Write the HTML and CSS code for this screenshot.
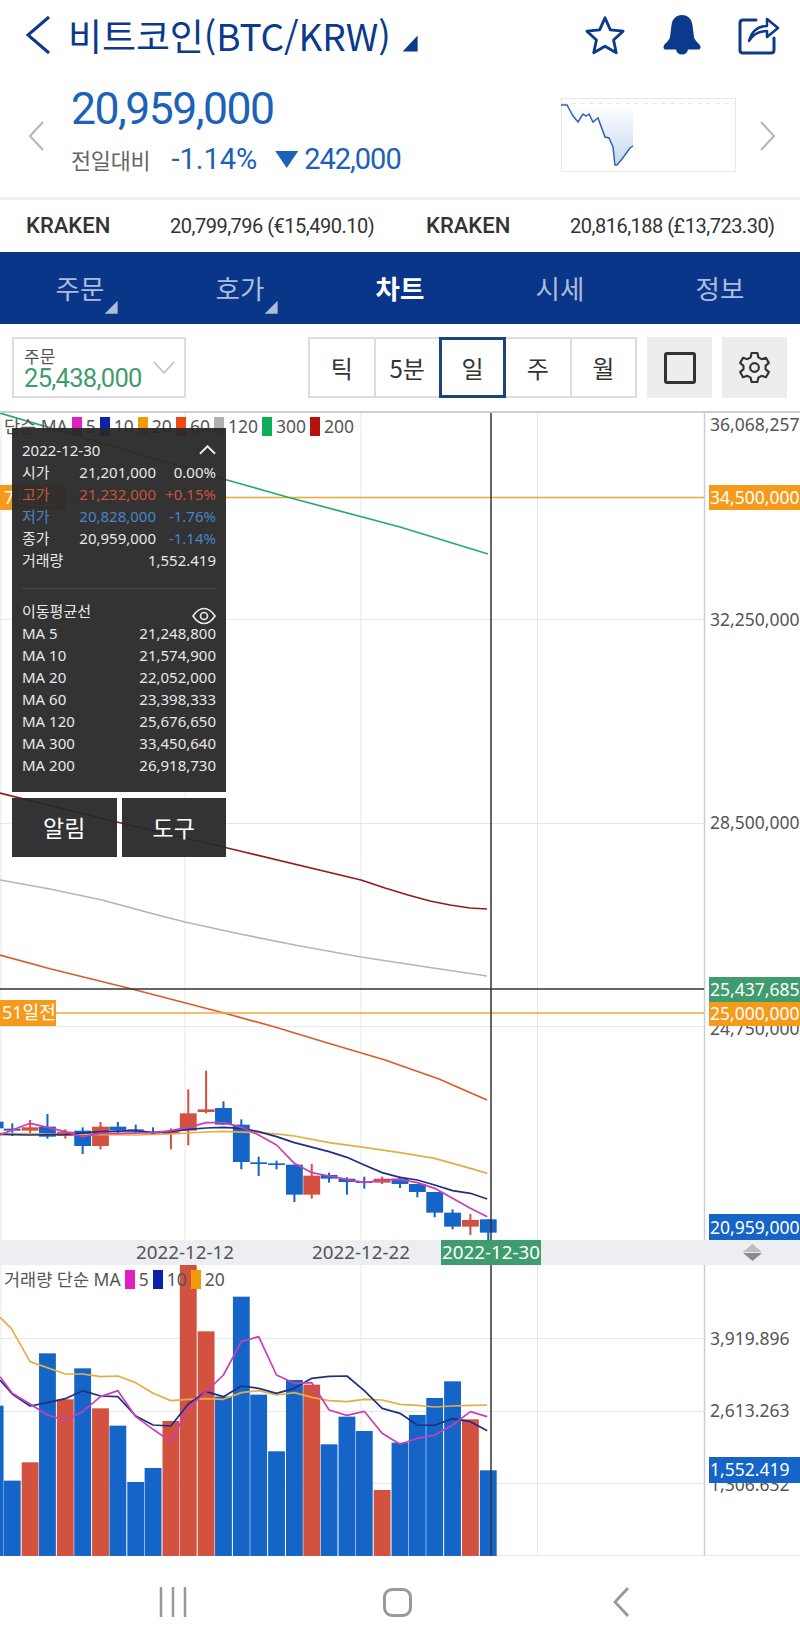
FILE: index.html
```html
<!DOCTYPE html>
<html lang="ko">
<head>
<meta charset="utf-8">
<title>비트코인 차트</title>
<link rel="stylesheet" href="styles.css">
</head>
<body>
<div class="app">
  <header class="title-row">
    <svg class="back" viewBox="0 0 26 40"><polyline points="24,2 3,20 24,38"/></svg>
    <h1 class="title">비트코인(BTC/KRW)</h1>
    <span class="title-caret"></span>
    <div class="title-icons">
      <svg class="ico" viewBox="0 0 44 42"><polygon class="star" points="22,3 27.6,15.6 41,17 31,26.2 33.8,39.6 22,32.8 10.2,39.6 13,26.2 3,17 16.4,15.6"/></svg>
      <svg class="ico bell" viewBox="0 0 38 40"><path d="M19 0C25 0 29 4 29.600 11L31 22C31.600 26 37.500 29 37.500 32.200C37.500 33.800 36.500 34.500 35 34.500H25C24.500 37.700 22 39.500 19 39.500C16 39.500 13.500 37.700 13 34.500H3C1.500 34.500 .5 33.800 .5 32.200C.5 29 6.400 26 7 22L8.400 11C9 4 13 0 19 0Z"/></svg>
      <svg class="ico" viewBox="0 0 42 40"><path class="share" d="M18 5H5Q2 5 2 8V35Q2 38 5 38H33Q36 38 36 35V23"/><path class="share-arrow" d="M11 26C14 15 21 11 29 11V4L40 13L29 22V16C21 16 15 19 11 26Z"/></svg>
    </div>
  </header>

  <section class="quote">
    <svg class="pager" viewBox="0 0 16 30"><polyline points="15,1 2,15 15,29"/></svg>
    <div class="price-block">
      <div class="price">20,959,000</div>
      <div class="change">
        <span class="change-label">전일대비</span>
        <span class="change-pct">-1.14%</span>
        <span class="change-tri"></span>
        <span class="change-val">242,000</span>
      </div>
    </div>
    <svg class="spark" viewBox="561 98 175 74">
      <defs><linearGradient id="sf" x1="0" y1="0" x2="0" y2="1"><stop offset="0" stop-color="#ffffff"/><stop offset="1" stop-color="#c5d8ef"/></linearGradient></defs>
      <rect class="spark-box" x="561.500" y="98.500" width="174" height="73"/>
      <line class="spark-dots" x1="562" y1="103.500" x2="735" y2="103.500"/>
      <polygon fill="url(#sf)" points="567,104 633,104 633,146 630,148 622,159 616,165 613,147 609,138 605,137 598,118 593,122 589,114 583,114 578,122 573,116 567,105"/>
      <polyline class="spark-line" points="561,105 567,105 573,116 578,122 583,114 586,116 589,114 593,122 598,118 605,137 609,138 613,147 615,165 617,165 622,159 630,148 633,146"/>
    </svg>
    <svg class="pager" viewBox="0 0 16 30"><polyline points="1,1 14,15 1,29"/></svg>
  </section>

  <section class="ticker">
    <div class="ticker-cell"><strong>KRAKEN</strong><span>20,799,796 (€15,490.10)</span></div>
    <div class="ticker-cell"><strong>KRAKEN</strong><span>20,816,188 (£13,723.30)</span></div>
  </section>

  <nav class="tabs">
    <div class="tab"><span class="tab-text has-menu">주문</span></div>
    <div class="tab"><span class="tab-text has-menu">호가</span></div>
    <div class="tab active"><span class="tab-text">차트</span></div>
    <div class="tab"><span class="tab-text">시세</span></div>
    <div class="tab"><span class="tab-text">정보</span></div>
  </nav>

  <section class="controls">
    <div class="select">
      <div class="select-text"><div class="select-label">주문</div><div class="select-value">25,438,000</div></div>
      <svg class="select-chev" viewBox="0 0 24 14"><polyline points="1,1 12,13 23,1"/></svg>
    </div>
    <div class="periods">
      <div class="period">틱</div>
      <div class="period">5분</div>
      <div class="period selected">일</div>
      <div class="period">주</div>
      <div class="period">월</div>
    </div>
    <div class="tool"><span class="tool-square"></span></div>
    <div class="tool">
      <svg class="gear" viewBox="0 0 32 34"><path d="M13 2H19L20 6.500L23.400 8.400L27.800 7L30.800 12.200L27.400 15.300V18.700L30.800 21.800L27.800 27L23.400 25.600L20 27.500L19 32H13L12 27.500L8.600 25.600L4.200 27L1.200 21.800L4.600 18.700V15.300L1.200 12.200L4.200 7L8.600 8.400L12 6.500Z"/><circle cx="16" cy="17" r="4.500"/></svg>
    </div>
  </section>

  <section class="chart">
    <svg class="plot" viewBox="0 411 800 1145">
      <!-- grid -->
      <g class="grid">
        <line x1="1" y1="411" x2="1" y2="1556"/>
        <line x1="185" y1="411" x2="185" y2="1556"/>
        <line x1="361" y1="411" x2="361" y2="1556"/>
        <line x1="537.500" y1="411" x2="537.500" y2="1556"/>
        <line x1="0" y1="619.500" x2="704" y2="619.500"/>
        <line x1="0" y1="823.500" x2="704" y2="823.500"/>
        <line x1="0" y1="1026.500" x2="704" y2="1026.500"/>
        <line x1="0" y1="1338.500" x2="704" y2="1338.500"/>
        <line x1="0" y1="1411.500" x2="704" y2="1411.500"/>
        <line x1="0" y1="1483.500" x2="704" y2="1483.500"/>
        <line x1="0" y1="1555.500" x2="800" y2="1555.500"/>
      </g>
      <line class="axis" x1="704.500" y1="411" x2="704.500" y2="1556"/>

      <!-- long moving averages -->
      <line class="level" x1="0" y1="497.500" x2="704" y2="497.500"/>
      <polyline class="ma ma-green" points="0,413 227,480 287,497 400,527 488,554"/>
      <polyline class="ma ma-darkred" points="0,793 117,822 240,851 361,880 385,888 408,895 430,901 450,905 470,908 487,909"/>
      <polyline class="ma ma-gray" points="0,880 50,889 102,900 150,913 185,922 240,934 300,946 361,957 420,966 487,976"/>
      <polyline class="ma ma-coral" points="0,955 51,969 128,988 224,1013 275,1027 321,1041 385,1060 439,1079 487,1100"/>
      <line class="cross" x1="0" y1="989" x2="704" y2="989"/>
      <line class="level" x1="0" y1="1013" x2="704" y2="1013"/>

      <!-- candles, bodies and wicks -->
      <g transform="translate(0 1040) scale(.5102 .3333)">
        <g class="dn">
          <rect x="955" y="538" width="4" height="62"/><rect x="940.500" y="538" width="33" height="40"/>
          <rect x="885" y="508" width="4" height="60"/><rect x="870.500" y="518" width="33" height="42"/>
          <rect x="850" y="456" width="4" height="76"/><rect x="835.500" y="456" width="33" height="62"/>
          <rect x="816" y="432" width="4" height="40"/><rect x="801.500" y="432" width="33" height="24"/>
          <rect x="782" y="410" width="4" height="34"/><rect x="767.500" y="416" width="33" height="16"/>
          <rect x="712" y="410" width="4" height="36"/><rect x="697.500" y="424" width="33" height="5"/>
          <rect x="678" y="412" width="4" height="52"/><rect x="663.500" y="416" width="33" height="10"/>
          <rect x="643" y="398" width="4" height="30"/><rect x="628.500" y="405" width="33" height="11"/>
          <rect x="575" y="374" width="4" height="112"/><rect x="560.500" y="374" width="33" height="90"/>
          <rect x="540" y="362" width="4" height="26"/><rect x="525.500" y="370" width="33" height="5"/>
          <rect x="505" y="350" width="4" height="58"/><rect x="490.500" y="367" width="33" height="5"/>
          <rect x="471" y="238" width="4" height="150"/><rect x="456.500" y="254" width="33" height="112"/>
          <rect x="436" y="184" width="4" height="70"/><rect x="421.500" y="204" width="33" height="50"/>
          <rect x="298" y="262" width="4" height="23"/><rect x="283.500" y="275" width="33" height="5"/>
          <rect x="264" y="254" width="4" height="26"/><rect x="249.500" y="268" width="33" height="4"/>
          <rect x="229" y="246" width="4" height="36"/><rect x="214.500" y="260" width="33" height="10"/>
          <rect x="160" y="262" width="4" height="80"/><rect x="145.500" y="272" width="33" height="46"/>
          <rect x="91" y="222" width="4" height="74"/><rect x="76.500" y="260" width="33" height="30"/>
          <rect x="22" y="250" width="4" height="38"/><rect x="7.500" y="266" width="33" height="6"/>
          <rect x="-26" y="245" width="33" height="20"/>
        </g>
        <g class="up">
          <rect x="920" y="522" width="4" height="63"/><rect x="905.500" y="540" width="33" height="20"/>
          <rect x="747" y="410" width="4" height="22"/><rect x="732.500" y="416" width="33" height="12"/>
          <rect x="609" y="372" width="4" height="104"/><rect x="594.500" y="407" width="33" height="57"/>
          <rect x="402" y="92" width="4" height="128"/><rect x="387.500" y="208" width="33" height="8"/>
          <rect x="367" y="148" width="4" height="168"/><rect x="352.500" y="220" width="33" height="52"/>
          <rect x="333" y="265" width="4" height="63"/><rect x="318.500" y="275" width="33" height="7"/>
          <rect x="195" y="246" width="4" height="82"/><rect x="180.500" y="260" width="33" height="58"/>
          <rect x="126" y="268" width="4" height="28"/><rect x="111.500" y="275" width="33" height="13"/>
          <rect x="57" y="240" width="4" height="45"/><rect x="42.500" y="262" width="33" height="10"/>
        </g>
        <polyline class="ma ma-tan" points="0,280 100,282 197,284 266,285 335,282 404,276 438,274 507,278 550,283 577,288 645,308 714,322 784,338 852,355 887,370 922,385 955,400"/>
        <polyline class="ma ma-navy" points="0,283 59,285 128,283 197,275 266,272 300,278 335,275 369,268 404,264 438,262 473,265 507,275 542,290 577,308 645,335 680,352 714,375 749,398 784,412 818,420 852,435 887,452 922,460 955,477"/>
        <polyline class="ma ma-pink" points="0,285 24,270 59,250 93,262 128,275 162,290 197,280 231,280 300,278 335,272 369,262 404,248 438,248 473,262 507,285 542,315 577,370 611,398 645,408 680,418 714,428 749,420 784,418 818,428 852,445 887,475 922,505 955,530"/>
      </g>

      <!-- volume bars -->
      <g transform="translate(0 1260) scale(.5102 .3333)">
        <g class="dn">
          <rect x="940.500" y="631" width="33" height="257"/>
          <rect x="870.500" y="364" width="33" height="524"/>
          <rect x="835.500" y="414" width="33" height="474"/>
          <rect x="801.500" y="465" width="33" height="423"/>
          <rect x="767.500" y="548" width="33" height="340"/>
          <rect x="697.500" y="513" width="33" height="375"/>
          <rect x="663.500" y="470" width="33" height="418"/>
          <rect x="628.500" y="553" width="33" height="335"/>
          <rect x="560.500" y="360" width="33" height="528"/>
          <rect x="525.500" y="574" width="33" height="314"/>
          <rect x="490.500" y="404" width="33" height="484"/>
          <rect x="456.500" y="110" width="33" height="778"/>
          <rect x="421.500" y="410" width="33" height="478"/>
          <rect x="283.500" y="624" width="33" height="264"/>
          <rect x="249.500" y="666" width="33" height="222"/>
          <rect x="214.500" y="497" width="33" height="391"/>
          <rect x="145.500" y="325" width="33" height="563"/>
          <rect x="76.500" y="280" width="33" height="608"/>
          <rect x="7.500" y="662" width="33" height="226"/>
          <rect x="-26" y="437" width="33" height="451"/>
        </g>
        <g class="up">
          <rect x="905.500" y="478" width="33" height="410"/>
          <rect x="732.500" y="690" width="33" height="198"/>
          <rect x="594.500" y="374" width="33" height="514"/>
          <rect x="387.500" y="214" width="33" height="674"/>
          <rect x="352.500" y="15" width="33" height="873"/>
          <rect x="318.500" y="483" width="33" height="405"/>
          <rect x="180.500" y="445" width="33" height="443"/>
          <rect x="111.500" y="418" width="33" height="470"/>
          <rect x="42.500" y="607" width="33" height="281"/>
        </g>
        <polyline class="ma ma-tan" points="0,172 22,205 59,305 128,342 162,342 197,350 231,348 266,368 300,400 335,422 369,418 404,416 438,418 473,398 507,392 542,405 577,398 611,412 645,422 680,425 714,418 749,420 784,433 818,436 852,441 887,438 922,436 955,435"/>
        <polyline class="ma ma-navy" points="0,360 24,402 59,438 93,428 128,416 162,392 197,408 231,410 266,468 300,495 335,498 369,432 404,395 438,410 473,378 507,385 542,400 577,385 611,355 645,349 680,348 714,392 749,445 784,460 818,495 852,496 887,476 922,485 955,512"/>
        <polyline class="ma ma-pink" points="0,350 24,400 59,432 93,465 128,481 162,455 197,410 231,392 266,470 300,508 335,545 369,445 404,395 438,345 473,245 507,230 542,345 577,370 611,368 645,450 680,466 714,454 749,520 784,553 818,535 852,525 887,495 922,455 955,470"/>
      </g>

      <!-- date band -->
      <rect class="band" x="0" y="1240" width="800" height="25"/>
      <line class="cross" x1="491" y1="411" x2="491" y2="1556"/>
      <text class="date" x="185" y="1259">2022-12-12</text>
      <text class="date" x="361" y="1259">2022-12-22</text>
      <rect class="tag-green" x="441" y="1240" width="100" height="25"/>
      <text class="date date-on" x="491" y="1259">2022-12-30</text>
      <polygon class="arrow-up" points="752.500,1244 762,1252 743,1252"/>
      <polygon class="arrow-down" points="743,1253 762,1253 752.500,1261"/>

      <!-- axis labels -->
      <text class="ax" x="710" y="431">36,068,257</text>
      <text class="ax" x="710" y="626">32,250,000</text>
      <text class="ax" x="710" y="829">28,500,000</text>
      <text class="ax" x="710" y="1035">24,750,000</text>
      <rect class="tag-orange" x="709" y="485" width="91" height="25"/>
      <text class="ax ax-on" x="710" y="504">34,500,000</text>
      <rect class="tag-green" x="709" y="977" width="91" height="25"/>
      <text class="ax ax-on" x="710" y="996">25,437,685</text>
      <rect class="tag-orange" x="709" y="1002" width="91" height="24"/>
      <text class="ax ax-on" x="710" y="1020">25,000,000</text>
      <rect class="tag-blue" x="709" y="1214" width="91" height="26"/>
      <text class="ax ax-on" x="710" y="1234">20,959,000</text>
      <text class="ax" x="710" y="1345">3,919.896</text>
      <text class="ax" x="710" y="1417">2,613.263</text>
      <text class="ax" x="710" y="1491">1,306.632</text>
      <rect class="tag-blue" x="709" y="1457" width="91" height="26"/>
      <text class="ax ax-on" x="710" y="1476">1,552.419</text>

      <!-- level tags on the left -->
      <rect class="tag-orange" x="0" y="485" width="66" height="25"/>
      <text class="lvl" x="4" y="504">71일전</text>
      <rect class="tag-orange" x="0" y="1000" width="56" height="26"/>
      <text class="lvl" x="2" y="1019">51일전</text>
    </svg>

    <div class="legend legend-price">
      <span>단순 MA</span>
      <i class="sw c-pink"></i><span>5</span>
      <i class="sw c-navy"></i><span>10</span>
      <i class="sw c-orange"></i><span>20</span>
      <i class="sw c-red"></i><span>60</span>
      <i class="sw c-gray"></i><span>120</span>
      <i class="sw c-green"></i><span>300</span>
      <i class="sw c-dark"></i><span>200</span>
    </div>
    <div class="legend legend-vol">
      <span>거래량 단순 MA</span>
      <i class="sw c-pink"></i><span>5</span>
      <i class="sw c-navy"></i><span>10</span>
      <i class="sw c-orange"></i><span>20</span>
    </div>

    <aside class="overlay">
      <div class="panel">
        <div class="row row-head"><span class="row-label">2022-12-30</span>
          <svg class="collapse" viewBox="0 0 18 10"><polyline points="1,9 9,1 17,9"/></svg></div>
        <div class="row"><span class="row-label">시가</span><span>21,201,000</span><span class="pct">0.00%</span></div>
        <div class="row tone-red"><span class="row-label">고가</span><span>21,232,000</span><span class="pct">+0.15%</span></div>
        <div class="row tone-blue"><span class="row-label">저가</span><span>20,828,000</span><span class="pct">-1.76%</span></div>
        <div class="row"><span class="row-label">종가</span><span>20,959,000</span><span class="pct tone-blue">-1.14%</span></div>
        <div class="row"><span class="row-label">거래량</span><span>1,552.419</span></div>
        <div class="divider"></div>
        <div class="row row-head"><span class="row-label">이동평균선</span>
          <svg class="eye" viewBox="0 0 24 18"><path d="M1 9C5 3 8.500 1.500 12 1.500C15.500 1.500 19 3 23 9C19 15 15.500 16.500 12 16.500C8.500 16.500 5 15 1 9Z"/><circle cx="12" cy="9" r="3.500"/></svg></div>
        <div class="row"><span class="row-label">MA 5</span><span>21,248,800</span></div>
        <div class="row"><span class="row-label">MA 10</span><span>21,574,900</span></div>
        <div class="row"><span class="row-label">MA 20</span><span>22,052,000</span></div>
        <div class="row"><span class="row-label">MA 60</span><span>23,398,333</span></div>
        <div class="row"><span class="row-label">MA 120</span><span>25,676,650</span></div>
        <div class="row"><span class="row-label">MA 300</span><span>33,450,640</span></div>
        <div class="row"><span class="row-label">MA 200</span><span>26,918,730</span></div>
      </div>
      <div class="panel-buttons">
        <div class="panel-btn">알림</div>
        <div class="panel-btn">도구</div>
      </div>
    </aside>
  </section>

  <footer class="sysnav">
    <div class="sys"><svg class="sys-menu" viewBox="0 0 28 30"><path d="M2 0V30M14 0V30M26 0V30"/></svg></div>
    <div class="sys"><span class="sys-home"></span></div>
    <div class="sys"><svg class="sys-back" viewBox="0 0 18 32"><polyline points="16,2 3,16 16,30"/></svg></div>
  </footer>
</div>
</body>
</html>
```
FILE: styles.css
```css
* { box-sizing: border-box; }
html, body { margin: 0; padding: 0; background: #fff; }
body { font-family: "Roboto", "Noto Sans CJK KR", sans-serif; color: #333; }
.app { width: 800px; height: 1650px; overflow: hidden; background: #fff; }

/* title row */
.title-row { height: 80px; display: flex; align-items: center; padding: 0 20px 10px 25px; }
.back { width: 26px; height: 40px; fill: none; stroke: #0b3a8c; stroke-width: 3; }
.title { margin: 0 0 0 17px; font: 400 37px/1 "Noto Sans CJK KR", sans-serif; color: #0b3a8c; letter-spacing: -.1px; white-space: nowrap; }
.title-caret { width: 15px; height: 16px; margin: 17px 0 0 12px; background: #0b3a8c; clip-path: polygon(100% 0, 100% 100%, 0 100%); }
.title-icons { margin-left: auto; display: flex; align-items: center; gap: 37px; }
.ico { width: 42px; height: 40px; display: block; overflow: visible; }
.ico.bell { width: 38px; }
.star { fill: none; stroke: #0b3a8c; stroke-width: 3; stroke-linejoin: round; }
.bell path { fill: #0b3a8c; }
.share { fill: none; stroke: #0b3a8c; stroke-width: 3; stroke-linecap: round; }
.share-arrow { fill: #fff; stroke: #0b3a8c; stroke-width: 2.5; stroke-linejoin: round; }

/* quote row */
.quote { height: 117px; display: flex; align-items: flex-start; padding: 3px 24px 0 28px; }
.pager { width: 16px; height: 30px; fill: none; stroke: #b5b5b5; stroke-width: 2; margin-top: 38px; }
.price-block { margin-left: 27px; flex: 1; }
.price { font: 400 44.5px/52px "Roboto", sans-serif; color: #1c62b6; letter-spacing: -1.5px; }
.change { display: flex; align-items: center; height: 36px; margin-top: 6.500px; }
.change-label { font: 400 21.800px/1 "Noto Sans CJK KR", sans-serif; color: #666; letter-spacing: -.2px; }
.change-pct { margin-left: 21px; font: 400 29px/1 "Roboto", sans-serif; color: #1c62b6; }
.change-tri { width: 23px; height: 17px; margin-left: 18px; background: #1c62b6; clip-path: polygon(0 0, 100% 0, 50% 100%); }
.change-val { margin-left: 6px; font: 400 29px/1 "Roboto", sans-serif; color: #1c62b6; letter-spacing: -1px; }
.spark { width: 175px; height: 74px; margin: 15px 24px 0 0; flex: none; }
.spark-box { fill: none; stroke: #e6e8ec; stroke-width: 1; }
.spark-dots { stroke: #e6e8ec; stroke-width: 1; stroke-dasharray: 5 4; }
.spark-line { fill: none; stroke: #2a66ad; stroke-width: 1.500; }

/* ticker */
.ticker { height: 55px; border-top: 3px solid #f0f0f0; display: flex; padding: 0 25px 0 26px; }
.ticker-cell { width: 400px; display: flex; align-items: center; }
.ticker-cell:last-child { width: 349px; }
.ticker-cell strong { font: 500 22px/1 "Roboto", sans-serif; color: #333; width: 144px; flex: none; }
.ticker-cell span { font: 400 20px/1 "Roboto", sans-serif; color: #333; letter-spacing: -.5px; white-space: nowrap; }

/* tabs */
.tabs { height: 72px; background: #0a3689; display: flex; }
.tab { width: 160px; display: flex; align-items: center; justify-content: center; }
.tab-text { position: relative; font: 400 26.500px/1 "Noto Sans CJK KR", sans-serif; color: #aebcdb; }
.has-menu::after { content: ""; position: absolute; left: 49px; top: 26px; width: 13px; height: 13px; background: #aebcdb; clip-path: polygon(100% 0, 100% 100%, 0 100%); }
.tab.active .tab-text { color: #fff; font-weight: 700; }

/* controls */
.controls { height: 87px; display: flex; align-items: flex-start; padding: 13px 12px 0; }
.select { width: 174px; height: 61px; border: 2px solid #ddd; display: flex; align-items: center; padding: 0 9px 0 10px; }
.select-text { flex: 1; }
.select-label { font: 400 17px/19px "Noto Sans CJK KR", sans-serif; color: #555; margin-top: 1px; }
.select-value { font: 400 25.500px/26px "Roboto", sans-serif; color: #3f9c6d; letter-spacing: -.7px; }
.select-chev { width: 22px; height: 13px; fill: none; stroke: #bbb; stroke-width: 1.500; }
.periods { margin-left: 122px; width: 329px; height: 61px; border: 2px solid #ddd; display: flex; }
.period { flex: 1; display: flex; align-items: center; justify-content: center; font: 400 24px/1 "Noto Sans CJK KR", sans-serif; color: #333; border-left: 2px solid #ddd; }
.period:first-child { border-left: 0; }
.period.selected { margin: -2px 0; border: 3px solid #1b4478; flex: none; width: 67px; }
.period.selected + .period { border-left: 0; }
.tool { width: 65px; height: 61px; margin-left: 10px; background: #ededed; display: flex; align-items: center; justify-content: center; }
.tool-square { width: 32px; height: 32px; border: 3px solid #333; border-radius: 3px; }
.gear { width: 31px; height: 33px; fill: none; stroke: #333; stroke-width: 2.200; stroke-linejoin: round; }

/* chart */
.chart { position: relative; height: 1145px; border-top: 0; }
.plot { display: block; width: 800px; height: 1145px; font-family: "Noto Sans", "Noto Sans CJK KR", sans-serif; }
.chart::before { content: ""; position: absolute; left: 0; right: 0; top: 0; height: 2px; background: #cfcfcf; }
.grid line { stroke: #e8e8e8; stroke-width: 1; }
.axis { stroke: #cdcdcd; stroke-width: 1.500; }
.level { stroke: #eea93a; stroke-width: 1.500; }
.cross { stroke: #333; stroke-width: 1.500; }
.ma { fill: none; stroke-width: 1.700; vector-effect: non-scaling-stroke; stroke-linejoin: round; }
.ma-green { stroke: #2aa96e; }
.ma-darkred { stroke: #8f1d1d; }
.ma-gray { stroke: #b5b5b5; }
.ma-coral { stroke: #dc5a2e; }
.ma-tan { stroke: #e3ae45; }
.ma-navy { stroke: #20307f; }
.ma-pink { stroke: #c93fb8; }
.dn { fill: #1565c8; }
.up { fill: #d3523f; }
.band { fill: #eceef2; }
.date { font-size: 18.800px; fill: #555; text-anchor: middle; }
.date-on { fill: #fff; }
.ax { font-size: 17.500px; fill: #555; }
.ax-on { fill: #fff; }
.lvl { font-size: 18px; fill: #fff; }
.tag-green { fill: #3f9c6d; }
.tag-orange { fill: #f69a1c; }
.tag-blue { fill: #1565c8; }
.arrow-up { fill: #bcbcbc; }
.arrow-down { fill: #8a8a8a; }

/* legends */
.legend { position: absolute; display: flex; align-items: center; font: 400 17.500px/20px "Noto Sans", "Noto Sans CJK KR", sans-serif; color: #555; white-space: nowrap; }
.legend-price { left: 4px; top: 5px; }
.legend-vol { left: 4px; top: 858px; }
.sw { display: block; width: 10px; height: 19px; margin: 0 4px 0 4px; }
.c-pink { background: #e01fc0; }
.c-navy { background: #0a23a8; }
.c-orange { background: #f09c0a; }
.c-red { background: #f04a14; }
.c-gray { background: #b0b0b0; }
.c-green { background: #0faf5a; }
.c-dark { background: #b80f0f; }

/* floating info panel */
.overlay { position: absolute; left: 12px; top: 17px; width: 214px; display: flex; flex-direction: column; gap: 6px; }
.panel { height: 364px; padding: 11px 10px 0; background: rgba(40, 40, 40, .95); font: 400 15px/22.100px "Noto Sans", "Noto Sans CJK KR", sans-serif; color: #e8e8e8; }
.row { display: flex; justify-content: space-between; height: 22.100px; white-space: nowrap; }
.row-label { flex: 1; }
.pct { width: 60px; text-align: right; }
.tone-red { color: #c8543f; }
.tone-blue { color: #4a83c9; }
.row .tone-blue { color: #4a83c9; }
.row-head { align-items: center; }
.collapse { width: 17px; height: 10px; fill: none; stroke: #eee; stroke-width: 2; }
.eye { width: 24px; height: 18px; fill: none; stroke: #e8e8e8; stroke-width: 1.700; margin-top: 10px; position: relative; overflow: visible; }
.divider { height: 1px; background: #4a4a4a; margin: 16px 0 11px; }
.panel-buttons { display: flex; gap: 5px; height: 59px; }
.panel-btn { flex: 1; display: flex; align-items: center; justify-content: center; background: rgba(40, 40, 40, .95); color: #fff; font: 400 23px/1 "Noto Sans CJK KR", sans-serif; }

/* android nav */
.sysnav { height: 94px; display: flex; justify-content: center; padding: 0 6px 0 0; }
.sys { width: 224px; display: flex; align-items: center; justify-content: center; padding-bottom: 2px; }
.sys-menu { width: 28px; height: 30px; fill: none; stroke: #999; stroke-width: 2.500; }
.sys-home { width: 29px; height: 29px; border: 3.500px solid #999; border-radius: 9px; }
.sys-back { width: 18px; height: 32px; fill: none; stroke: #999; stroke-width: 2.800; }
```
